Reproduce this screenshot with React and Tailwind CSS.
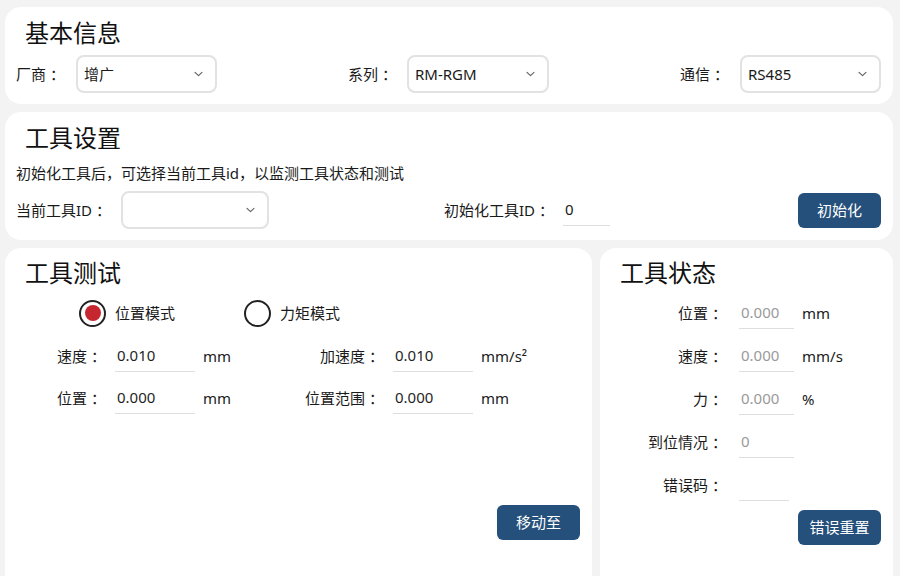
import React from "react";

const Chevron = () => (
  <svg width="9" height="6" viewBox="0 0 9 6" fill="none">
    <path d="M1 1.3 L4.5 4.6 L8 1.3" stroke="#5f5f5f" strokeWidth="1.1" strokeLinecap="round" strokeLinejoin="round" />
  </svg>
);

const Select = ({ value, w }) => (
  <div className={`flex h-[38px] items-center justify-between rounded-[8px] border-2 border-[#e2e2e2] bg-white pl-[6px] pr-[12px] ${w}`}>
    <span className="text-[15px] text-[#1a1a1a]">{value}</span>
    <Chevron />
  </div>
);

const Btn = ({ children, className = "" }) => (
  <div className={`flex h-[35px] w-[83px] items-center justify-center rounded-[6px] bg-[#24507b] text-[15px] text-white ${className}`}>
    {children}
  </div>
);

const Title = ({ children }) => (
  <div className="ml-[9px] h-8 text-[24px] leading-8 text-[#111]">{children}</div>
);

const TestField = ({ label, value, unit }) => (
  <div className="flex h-8 items-center">
    <div className="w-[90px] text-right whitespace-pre">{label}</div>
    <div className="ml-[9px] flex h-8 w-[80px] items-center border-b border-[#dedede] pl-[2px] text-[#1f1f1f]">{value}</div>
    <div className="ml-[8px]">{unit}</div>
  </div>
);

const StatusField = ({ label, value, unit, w = "w-[55px]" }) => (
  <div className="flex h-8 items-center">
    <div className="w-[116px] text-right whitespace-pre">{label}</div>
    <div className={`ml-[12px] flex h-8 items-center border-b border-[#dedede] pl-[2px] text-[#9a9a9a] ${w}`}>{value}</div>
    {unit && <div className="ml-[8px]">{unit}</div>}
  </div>
);

const Radio = ({ checked, label }) => (
  <div className="flex w-[165px] items-center">
    <div className="flex h-[27px] w-[27px] items-center justify-center rounded-full border-[2.5px] border-[#222]">
      {checked && <div className="h-[16px] w-[16px] rounded-full bg-[#c6262f]" />}
    </div>
    <span className="ml-[9px]">{label}</span>
  </div>
);

export default function App() {
  return (
    <div className="flex h-screen flex-col gap-[8px] overflow-hidden bg-[#f3f3f3] pl-[5px] pr-[7px] pt-[7px] font-['Noto_Sans','Noto_Sans_CJK_SC',sans-serif] text-[15px] text-[#1a1a1a]">
      {/* 基本信息 */}
      <div className="flex flex-col rounded-2xl bg-white px-[11px] pb-[11px] pt-[10px] pr-[12px]">
        <Title>基本信息</Title>
        <div className="mt-[6px] flex items-center justify-between">
          <div className="flex items-center">
            <div className="w-[60px] whitespace-pre">厂商 ：</div>
            <Select value="增广" w="w-[141px]" />
          </div>
          <div className="flex items-center">
            <div className="w-[59px] whitespace-pre">系列 ：</div>
            <Select value="RM-RGM" w="w-[142px]" />
          </div>
          <div className="flex items-center">
            <div className="w-[60px] whitespace-pre">通信 ：</div>
            <Select value="RS485" w="w-[141px]" />
          </div>
        </div>
      </div>

      {/* 工具设置 */}
      <div className="flex flex-col rounded-2xl bg-white pb-[11px] pl-[11px] pr-[12px] pt-[10px]">
        <Title>工具设置</Title>
        <div className="mt-[9px] leading-[20px]">初始化工具后，可选择当前工具id，以监测工具状态和测试</div>
        <div className="mt-[8px] flex h-[38px] items-center">
          <div className="w-[105px] whitespace-pre">当前工具ID ：</div>
          <Select value="" w="w-[148px]" />
          <div className="ml-[175px] flex items-center">
            <div className="w-[119px] whitespace-pre">初始化工具ID ：</div>
            <div className="flex h-8 w-[47px] items-center border-b border-[#dedede] pl-[2px]">0</div>
          </div>
          <Btn className="ml-auto">初始化</Btn>
        </div>
      </div>

      {/* bottom */}
      <div className="flex min-h-0 flex-1 gap-[8px]">
        <div className="flex flex-1 flex-col rounded-t-2xl bg-white pl-[11px] pr-[12px] pt-[9px]">
          <Title>工具测试</Title>
          <div className="mt-[8px] flex h-8 items-center pl-[63px]">
            <Radio checked label="位置模式" />
            <Radio label="力矩模式" />
          </div>
          <div className="mt-[11px] grid grid-cols-[278px_278px]">
            <TestField label="速度 ：" value="0.010" unit="mm" />
            <TestField label="加速度 ：" value="0.010" unit="mm/s²" />
          </div>
          <div className="mt-[10px] grid grid-cols-[278px_278px]">
            <TestField label="位置 ：" value="0.000" unit="mm" />
            <TestField label="位置范围 ：" value="0.000" unit="mm" />
          </div>
          <div className="mt-[91px] flex justify-end">
            <Btn>移动至</Btn>
          </div>
        </div>

        <div className="flex w-[293px] flex-col rounded-t-2xl bg-white pl-[11px] pr-[12px] pt-[9px]">
          <Title>工具状态</Title>
          <div className="mt-[8px] flex flex-col gap-[11px]">
            <StatusField label="位置 ：" value="0.000" unit="mm" />
            <StatusField label="速度 ：" value="0.000" unit="mm/s" />
            <StatusField label="力 ：" value="0.000" unit="%" />
            <StatusField label="到位情况 ：" value="0" />
            <StatusField label="错误码 ：" value="" w="w-[50px]" />
          </div>
          <div className="mt-[9px] flex justify-end">
            <Btn>错误重置</Btn>
          </div>
        </div>
      </div>
    </div>
  );
}
